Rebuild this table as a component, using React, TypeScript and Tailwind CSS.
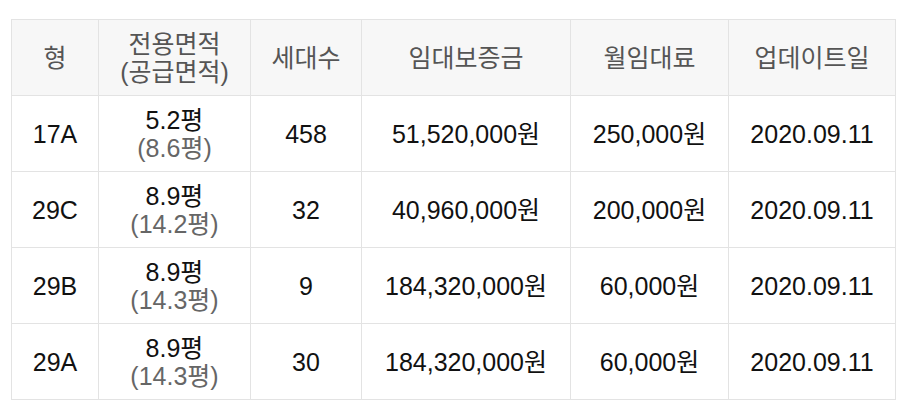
import React from 'react';

interface Unit {
  type: string;
  area: string;
  supply: string;
  households: string;
  deposit: string;
  rent: string;
  updated: string;
}

const units: Unit[] = [
  { type: '17A', area: '5.2평', supply: '(8.6평)', households: '458', deposit: '51,520,000원', rent: '250,000원', updated: '2020.09.11' },
  { type: '29C', area: '8.9평', supply: '(14.2평)', households: '32', deposit: '40,960,000원', rent: '200,000원', updated: '2020.09.11' },
  { type: '29B', area: '8.9평', supply: '(14.3평)', households: '9', deposit: '184,320,000원', rent: '60,000원', updated: '2020.09.11' },
  { type: '29A', area: '8.9평', supply: '(14.3평)', households: '30', deposit: '184,320,000원', rent: '60,000원', updated: '2020.09.11' },
];

const th = 'border border-[#e3e3e3] bg-[#f7f7f7] font-normal text-[#555] text-center align-middle';
const td = 'border border-[#e3e3e3] text-center align-middle';

const App: React.FC = () => {
  return (
    <div
      className="w-[919px] h-[414px] bg-white pt-[19px] pl-[11px]"
      style={{ fontFamily: '"Liberation Sans", Arial, "Noto Sans CJK KR", sans-serif' }}
    >
      <table className="border-collapse table-fixed w-[884px] text-[25px] leading-[28px] text-[#111]">
        <colgroup>
          <col className="w-[87px]" />
          <col className="w-[152px]" />
          <col className="w-[111px]" />
          <col className="w-[209px]" />
          <col className="w-[158px]" />
          <col className="w-[167px]" />
        </colgroup>
        <thead>
          <tr className="h-[76px]">
            <th className={th}>형</th>
            <th className={th}>
              전용면적
              <br />
              (공급면적)
            </th>
            <th className={th}>세대수</th>
            <th className={th}>임대보증금</th>
            <th className={th}>월임대료</th>
            <th className={th}>업데이트일</th>
          </tr>
        </thead>
        <tbody>
          {units.map((u) => (
            <tr key={u.type} className="h-[76px]">
              <td className={td}>{u.type}</td>
              <td className={td}>
                {u.area}
                <br />
                <span className="text-[#666]">{u.supply}</span>
              </td>
              <td className={td}>{u.households}</td>
              <td className={td}>{u.deposit}</td>
              <td className={td}>{u.rent}</td>
              <td className={td}>{u.updated}</td>
            </tr>
          ))}
        </tbody>
      </table>
    </div>
  );
};

export default App;
